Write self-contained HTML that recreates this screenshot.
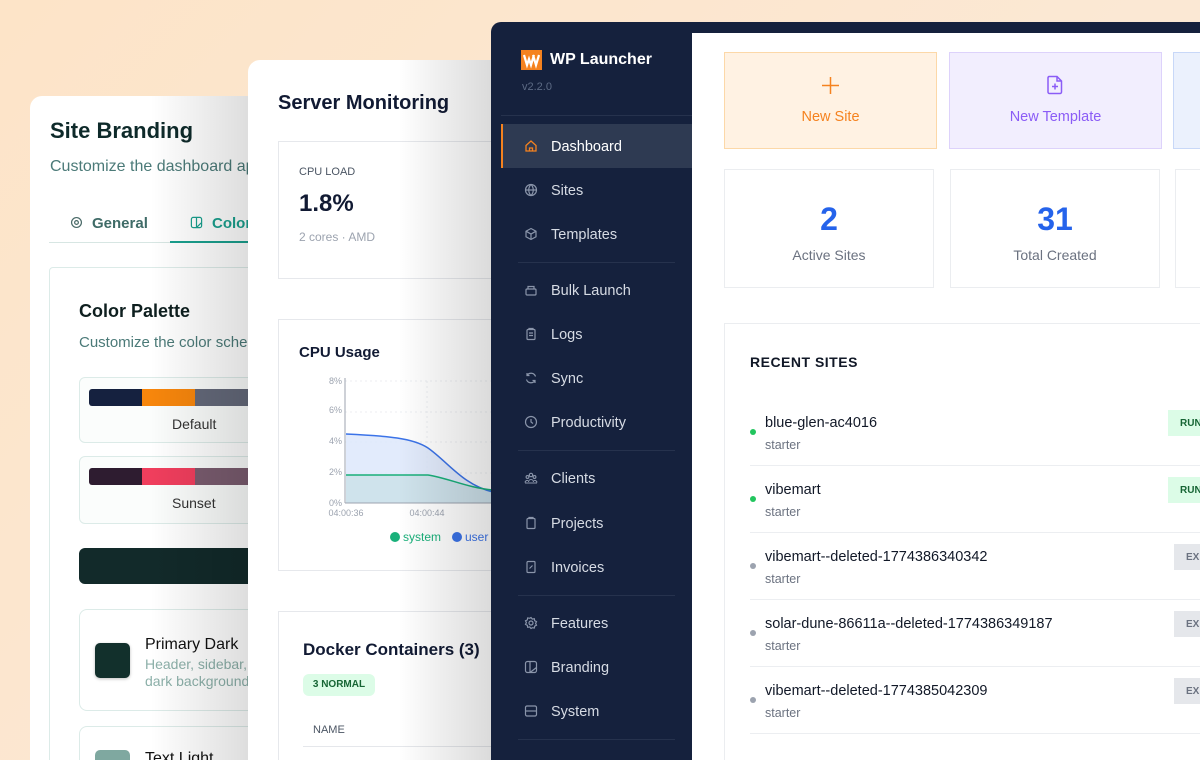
<!DOCTYPE html>
<html><head><meta charset="utf-8"><style>
*{box-sizing:border-box;margin:0;padding:0}
html{width:1200px;height:760px;overflow:hidden}
body{width:1200px;height:760px;overflow:hidden;position:relative;font-family:"Liberation Sans",sans-serif;background:linear-gradient(135deg,#fde4c8 0%,#fbe8d4 60%,#f9e9da 100%)}
.abs{position:absolute}
.card{position:absolute;background:#fff;border-radius:12px;overflow:hidden}
.shade{position:absolute;top:0;bottom:0;pointer-events:none}
.t{position:absolute;white-space:nowrap;margin-top:2px}
.nav{position:absolute;left:551px;color:#d6dbe4;font-size:14.5px;margin-top:2px}
.ico{position:absolute;left:524px;width:14px;height:14px}
.div{position:absolute;left:518px;width:157px;height:1px;background:#26324d}
</style></head><body>

<!-- Card 1: Site Branding -->
<div class="card" style="left:30px;top:96px;width:240px;height:700px">
  <div class="t" style="left:20px;top:20px;font-size:22px;font-weight:bold;color:#0e2a2a">Site Branding</div>
  <div class="t" style="left:20px;top:60px;font-size:16px;color:#4b7a78">Customize the dashboard appearance</div>
  <svg class="abs" style="left:40px;top:120px" width="13" height="13" viewBox="0 0 14 14" fill="none" stroke="#4a6a68" stroke-width="1.3"><circle cx="7" cy="7" r="2"/><circle cx="7" cy="7" r="5.3"/></svg>
  <div class="t" style="left:62px;top:117px;font-size:15px;font-weight:bold;color:#3f6b67">General</div>
  <svg class="abs" style="left:160px;top:120px" width="13" height="13" viewBox="0 0 14 14" fill="none" stroke="#1aa08e" stroke-width="1.3"><rect x="1.5" y="1.5" width="11" height="11" rx="2"/><path d="M7 1.5v11M7 12.5l5-5"/></svg>
  <div class="t" style="left:182px;top:117px;font-size:15px;font-weight:bold;color:#1aa08e">Colors</div>
  <div class="abs" style="left:19px;top:146px;width:230px;height:1px;background:#d7e6e3"></div>
  <div class="abs" style="left:140px;top:145px;width:100px;height:2px;background:#1aa08e"></div>
  <div class="abs" style="left:19px;top:171px;width:240px;height:560px;border:1px solid #dcebe8;border-radius:4px"></div>
  <div class="t" style="left:49px;top:203px;font-size:18px;font-weight:bold;color:#0e1f1f">Color Palette</div>
  <div class="t" style="left:49px;top:236px;font-size:15px;color:#4b7a78">Customize the color scheme</div>
  <div class="abs" style="left:49px;top:281px;width:200px;height:66px;border:1px solid #dcebe8;border-radius:6px;background:#fbfdfc"></div>
  <div class="abs" style="left:59px;top:293px;width:53px;height:17px;background:#15213f;border-radius:3px 0 0 3px"></div>
  <div class="abs" style="left:112px;top:293px;width:53px;height:17px;background:#f7860c"></div>
  <div class="abs" style="left:165px;top:293px;width:60px;height:17px;background:#64697a"></div>
  <div class="t" style="left:142px;top:318px;font-size:14px;color:#333">Default</div>
  <div class="abs" style="left:49px;top:360px;width:200px;height:68px;border:1px solid #dcebe8;border-radius:6px;background:#fbfdfc"></div>
  <div class="abs" style="left:59px;top:372px;width:53px;height:17px;background:#2e1c30;border-radius:3px 0 0 3px"></div>
  <div class="abs" style="left:112px;top:372px;width:53px;height:17px;background:#f03e5d"></div>
  <div class="abs" style="left:165px;top:372px;width:60px;height:17px;background:#7a5c6f"></div>
  <div class="t" style="left:142px;top:397px;font-size:14px;color:#333">Sunset</div>
  <div class="abs" style="left:49px;top:452px;width:200px;height:36px;background:#122a2a;border-radius:6px"></div>
  <div class="abs" style="left:49px;top:513px;width:200px;height:102px;border:1px solid #dcebe8;border-radius:8px"></div>
  <div class="abs" style="left:65px;top:547px;width:35px;height:35px;background:#12302c;border-radius:5px;box-shadow:0 1px 3px rgba(0,0,0,.25)"></div>
  <div class="t" style="left:115px;top:538px;font-size:16px;color:#111">Primary Dark</div>
  <div class="t" style="left:115px;top:558px;font-size:14px;color:#8cb0a9;line-height:17px">Header, sidebar,<br>dark background</div>
  <div class="abs" style="left:49px;top:630px;width:200px;height:100px;border:1px solid #dcebe8;border-radius:8px"></div>
  <div class="abs" style="left:65px;top:654px;width:35px;height:35px;background:#7fa8a0;border-radius:5px"></div>
  <div class="t" style="left:115px;top:652px;font-size:16px;color:#111">Text Light</div>
  <div class="shade" style="left:120px;width:120px;background:linear-gradient(90deg,rgba(0,0,0,0),rgba(0,0,0,.16))"></div>
</div>

<!-- Card 2: Server Monitoring -->
<div class="card" style="left:248px;top:60px;width:260px;height:740px">
  <div class="t" style="left:30px;top:30px;font-size:20px;font-weight:bold;color:#111a33">Server Monitoring</div>
  <div class="abs" style="left:30px;top:81px;width:240px;height:138px;border:1px solid #e6e8ec"></div>
  <div class="t" style="left:51px;top:104px;font-size:11px;color:#4b5563">CPU LOAD</div>
  <div class="t" style="left:51px;top:128px;font-size:24px;font-weight:bold;color:#111a33">1.8%</div>
  <div class="t" style="left:51px;top:168px;font-size:12px;color:#9ca3af">2 cores · AMD</div>
  <div class="abs" style="left:30px;top:259px;width:240px;height:252px;border:1px solid #e6e8ec"></div>
  <div class="t" style="left:51px;top:282px;font-size:15px;font-weight:bold;color:#111a33">CPU Usage</div>
  <svg class="abs" style="left:0;top:0" width="260" height="500">
    <g stroke="#eceef2" stroke-dasharray="2 3"><line x1="97" y1="321" x2="260" y2="321"/><line x1="97" y1="352" x2="260" y2="352"/><line x1="97" y1="382" x2="260" y2="382"/><line x1="97" y1="413" x2="260" y2="413"/><line x1="179" y1="321" x2="179" y2="443"/></g>
    <path d="M98 374 C140 376 165 378 180 388 C200 402 215 425 245 432 L245 443 L98 443Z" fill="#dbe6fb" opacity=".8"/>
    <path d="M98 415 L180 415 C200 418 220 428 245 430 L245 443 L98 443Z" fill="#cfe3ec"/>
    <path d="M98 374 C140 376 165 378 180 388 C200 402 215 425 245 432" fill="none" stroke="#3b73e8" stroke-width="1.5"/>
    <path d="M98 415 L180 415 C200 418 220 428 245 430" fill="none" stroke="#19b07a" stroke-width="1.5"/>
    <line x1="97" y1="318" x2="97" y2="443" stroke="#9ca3af"/><line x1="97" y1="443" x2="260" y2="443" stroke="#9ca3af"/>
    <g font-size="9" fill="#9ca3af" font-family="Liberation Sans" text-anchor="end"><text x="94" y="324">8%</text><text x="94" y="353">6%</text><text x="94" y="384">4%</text><text x="94" y="415">2%</text><text x="94" y="446">0%</text></g>
    <g font-size="9" fill="#9ca3af" font-family="Liberation Sans" text-anchor="middle"><text x="98" y="456">04:00:36</text><text x="179" y="456">04:00:44</text></g>
    <circle cx="147" cy="477" r="5" fill="#19b07a"/><text x="155" y="481" font-size="12" fill="#19b07a" font-family="Liberation Sans">system</text>
    <circle cx="209" cy="477" r="5" fill="#3b73e8"/><text x="217" y="481" font-size="12" fill="#3b73e8" font-family="Liberation Sans">user</text>
  </svg>
  <div class="abs" style="left:30px;top:551px;width:240px;height:200px;border:1px solid #e6e8ec"></div>
  <div class="t" style="left:55px;top:578px;font-size:17px;font-weight:bold;color:#111a33">Docker Containers (3)</div>
  <div class="abs" style="left:55px;top:614px;width:72px;height:22px;background:#dcfce7;border-radius:6px;font-size:10px;font-weight:bold;color:#166534;text-align:center;line-height:22px">3 NORMAL</div>
  <div class="t" style="left:65px;top:662px;font-size:11px;color:#4b5563">NAME</div>
  <div class="abs" style="left:55px;top:686px;width:200px;height:1px;background:#e5e7eb"></div>
  <div class="shade" style="left:150px;width:110px;background:linear-gradient(90deg,rgba(0,0,0,0),rgba(0,0,0,.17))"></div>
</div>

<!-- Card 3: App -->
<div class="abs" style="left:491px;top:22px;width:709px;height:738px;background:#15213d;border-radius:10px 0 0 0"></div>
<div class="abs" style="left:692px;top:33px;width:508px;height:727px;background:#fff"></div>

<!-- sidebar -->
<svg class="abs" style="left:521px;top:50px" width="21" height="20" viewBox="0 0 21 20"><rect width="21" height="20" fill="#f5821f"/><path d="M3 5l3 10 2-6 2 6 3-10M12 5l3 10 3-10" fill="none" stroke="#fff" stroke-width="2.2"/></svg>
<div class="t" style="left:550px;top:49px;font-size:16px;font-weight:bold;color:#fff">WP Launcher</div>
<div class="t" style="left:522px;top:79px;font-size:11px;color:#5d6b85">v2.2.0</div>
<div class="abs" style="left:501px;top:115px;width:191px;height:1px;background:#26324d"></div>
<div class="abs" style="left:501px;top:124px;width:191px;height:44px;background:#2e3a52;border-left:2px solid #f5821f"></div>
<svg class="ico" style="top:139px" viewBox="0 0 14 14" fill="none" stroke="#f5821f" stroke-width="1.3"><path d="M2 6.5L7 2l5 4.5V12H2z M5.5 12V9h3v3"/></svg>
<div class="nav" style="top:137px;color:#fff">Dashboard</div>
<svg class="ico" style="top:183px" viewBox="0 0 14 14" fill="none" stroke="#8a95aa" stroke-width="1.2"><circle cx="7" cy="7" r="5.5"/><path d="M1.5 7h11M7 1.5c-3 3-3 8 0 11c3-3 3-8 0-11"/></svg>
<div class="nav" style="top:181px">Sites</div>
<svg class="ico" style="top:227px" viewBox="0 0 14 14" fill="none" stroke="#8a95aa" stroke-width="1.2"><path d="M7 1.5l5 2.7v5.6L7 12.5 2 9.8V4.2zM2 4.2L7 7l5-2.8M7 7v5.5"/></svg>
<div class="nav" style="top:225px">Templates</div>
<div class="div" style="top:262px"></div>
<svg class="ico" style="top:283px" viewBox="0 0 14 14" fill="none" stroke="#8a95aa" stroke-width="1.2"><rect x="2" y="6" width="10" height="6" rx="1"/><path d="M4 6V3.5h6V6"/></svg>
<div class="nav" style="top:281px">Bulk Launch</div>
<svg class="ico" style="top:327px" viewBox="0 0 14 14" fill="none" stroke="#8a95aa" stroke-width="1.2"><rect x="3" y="2.5" width="8" height="10" rx="1"/><path d="M5 2.5V1.5h4v1M5 6h4M5 8.5h4"/></svg>
<div class="nav" style="top:325px">Logs</div>
<svg class="ico" style="top:371px" viewBox="0 0 14 14" fill="none" stroke="#8a95aa" stroke-width="1.2"><path d="M11.5 5.5A4.7 4.7 0 0 0 3 4.5M2.5 8.5A4.7 4.7 0 0 0 11 9.5M3 2v2.5h2.5M11 12V9.5H8.5"/></svg>
<div class="nav" style="top:369px">Sync</div>
<svg class="ico" style="top:415px" viewBox="0 0 14 14" fill="none" stroke="#8a95aa" stroke-width="1.2"><circle cx="7" cy="7" r="5.5"/><path d="M7 4v3l2 1.5"/></svg>
<div class="nav" style="top:413px">Productivity</div>
<div class="div" style="top:450px"></div>
<svg class="ico" style="top:471px" viewBox="0 0 14 14" fill="none" stroke="#8a95aa" stroke-width="1.1"><circle cx="7" cy="4" r="1.7"/><circle cx="3.5" cy="6" r="1.4"/><circle cx="10.5" cy="6" r="1.4"/><path d="M4.5 11a2.5 2.5 0 0 1 5 0M1 11.5a2.3 2.3 0 0 1 3-2M13 11.5a2.3 2.3 0 0 0-3-2M1 12h12"/></svg>
<div class="nav" style="top:469px">Clients</div>
<svg class="ico" style="top:516px" viewBox="0 0 14 14" fill="none" stroke="#8a95aa" stroke-width="1.2"><rect x="3" y="2.5" width="8" height="10" rx="1"/><path d="M5 2.5V1.5h4v1"/></svg>
<div class="nav" style="top:514px">Projects</div>
<svg class="ico" style="top:560px" viewBox="0 0 14 14" fill="none" stroke="#8a95aa" stroke-width="1.2"><rect x="3" y="1.5" width="8" height="11" rx="1"/><path d="M5.5 8.5l3-3M5.5 5.5h.1M8.5 8.5h.1"/></svg>
<div class="nav" style="top:558px">Invoices</div>
<div class="div" style="top:595px"></div>
<svg class="ico" style="top:616px" viewBox="0 0 14 14" fill="none" stroke="#8a95aa" stroke-width="1.2"><circle cx="7" cy="7" r="2"/><path d="M7 1.5l1.3 1.6 2-.4.4 2 1.8.9-.9 1.8.9 1.8-1.8.9-.4 2-2-.4L7 12.5l-1.3-1.6-2 .4-.4-2-1.8-.9.9-1.8-.9-1.8 1.8-.9.4-2 2 .4z"/></svg>
<div class="nav" style="top:614px">Features</div>
<svg class="ico" style="top:660px" viewBox="0 0 14 14" fill="none" stroke="#8a95aa" stroke-width="1.2"><rect x="1.5" y="1.5" width="11" height="11" rx="2"/><path d="M6 1.5v11M6 12.5l6.5-5"/></svg>
<div class="nav" style="top:658px">Branding</div>
<svg class="ico" style="top:704px" viewBox="0 0 14 14" fill="none" stroke="#8a95aa" stroke-width="1.2"><rect x="1.5" y="2" width="11" height="10" rx="1.5"/><path d="M1.5 7h11"/></svg>
<div class="nav" style="top:702px">System</div>
<div class="div" style="top:739px"></div>

<!-- main -->
<div class="abs" style="left:724px;top:52px;width:213px;height:97px;background:#fff2e3;border:1px solid #fcd8a8"></div>
<svg class="abs" style="left:821px;top:76px" width="19" height="19" viewBox="0 0 19 19" stroke="#f5821f" stroke-width="1.5"><path d="M9.5 1v17M1 9.5h17"/></svg>
<div class="t" style="left:724px;width:213px;text-align:center;top:107px;font-size:14.5px;color:#f5821f">New Site</div>
<div class="abs" style="left:949px;top:52px;width:213px;height:97px;background:#f2eefe;border:1px solid #ddd2fb"></div>
<svg class="abs" style="left:1047px;top:75px" width="16" height="20" viewBox="0 0 16 20" fill="none" stroke="#8b5cf6" stroke-width="1.5"><path d="M2 1.5h8l4.5 4.5v11a1.5 1.5 0 0 1-1.5 1.5H2.5A1.5 1.5 0 0 1 1 17V3a1.5 1.5 0 0 1 1-1.5zM10 1.5V6h4.5M8 8.5v6M5 11.5h6"/></svg>
<div class="t" style="left:949px;width:213px;text-align:center;top:107px;font-size:14.5px;color:#8b5cf6">New Template</div>
<div class="abs" style="left:1173px;top:52px;width:60px;height:97px;background:#ebf1fd;border:1px solid #c8d8f8"></div>

<div class="abs" style="left:724px;top:169px;width:210px;height:119px;border:1px solid #ebedf0"></div>
<div class="t" style="left:724px;width:210px;text-align:center;top:199px;font-size:32px;font-weight:bold;color:#2563eb">2</div>
<div class="t" style="left:724px;width:210px;text-align:center;top:245px;font-size:14px;color:#6b7280">Active Sites</div>
<div class="abs" style="left:950px;top:169px;width:210px;height:119px;border:1px solid #ebedf0"></div>
<div class="t" style="left:950px;width:210px;text-align:center;top:199px;font-size:32px;font-weight:bold;color:#2563eb">31</div>
<div class="t" style="left:950px;width:210px;text-align:center;top:245px;font-size:14px;color:#6b7280">Total Created</div>
<div class="abs" style="left:1175px;top:169px;width:60px;height:119px;border:1px solid #ebedf0"></div>

<div class="abs" style="left:724px;top:323px;width:520px;height:460px;border:1px solid #ebedf0"></div>
<div class="t" style="left:750px;top:352px;font-size:14px;font-weight:bold;color:#111827;letter-spacing:.5px">RECENT SITES</div>

<div class="abs" style="left:750px;top:429px;width:6px;height:6px;border-radius:50%;background:#22c55e"></div>
<div class="t" style="left:765px;top:413px;font-size:14.5px;color:#111827">blue-glen-ac4016</div>
<div class="t" style="left:765px;top:436px;font-size:12.5px;color:#6b7280">starter</div>
<div class="abs" style="left:1168px;top:410px;width:40px;height:26px;background:#dcfce7;color:#166534;font-size:10px;font-weight:bold;padding:8px 0 0 12px">RUN</div>
<div class="abs" style="left:750px;top:465px;width:460px;height:1px;background:#eceef1"></div>

<div class="abs" style="left:750px;top:496px;width:6px;height:6px;border-radius:50%;background:#22c55e"></div>
<div class="t" style="left:765px;top:480px;font-size:14.5px;color:#111827">vibemart</div>
<div class="t" style="left:765px;top:503px;font-size:12.5px;color:#6b7280">starter</div>
<div class="abs" style="left:1168px;top:477px;width:40px;height:26px;background:#dcfce7;color:#166534;font-size:10px;font-weight:bold;padding:8px 0 0 12px">RUN</div>
<div class="abs" style="left:750px;top:532px;width:460px;height:1px;background:#eceef1"></div>

<div class="abs" style="left:750px;top:563px;width:6px;height:6px;border-radius:50%;background:#9ca3af"></div>
<div class="t" style="left:765px;top:547px;font-size:14.5px;color:#111827">vibemart--deleted-1774386340342</div>
<div class="t" style="left:765px;top:570px;font-size:12.5px;color:#6b7280">starter</div>
<div class="abs" style="left:1174px;top:544px;width:40px;height:26px;background:#e5e7eb;color:#6b7280;font-size:10px;font-weight:bold;padding:8px 0 0 12px">EX</div>
<div class="abs" style="left:750px;top:599px;width:460px;height:1px;background:#eceef1"></div>

<div class="abs" style="left:750px;top:630px;width:6px;height:6px;border-radius:50%;background:#9ca3af"></div>
<div class="t" style="left:765px;top:614px;font-size:14.5px;color:#111827">solar-dune-86611a--deleted-1774386349187</div>
<div class="t" style="left:765px;top:637px;font-size:12.5px;color:#6b7280">starter</div>
<div class="abs" style="left:1174px;top:611px;width:40px;height:26px;background:#e5e7eb;color:#6b7280;font-size:10px;font-weight:bold;padding:8px 0 0 12px">EX</div>
<div class="abs" style="left:750px;top:666px;width:460px;height:1px;background:#eceef1"></div>

<div class="abs" style="left:750px;top:697px;width:6px;height:6px;border-radius:50%;background:#9ca3af"></div>
<div class="t" style="left:765px;top:681px;font-size:14.5px;color:#111827">vibemart--deleted-1774385042309</div>
<div class="t" style="left:765px;top:704px;font-size:12.5px;color:#6b7280">starter</div>
<div class="abs" style="left:1174px;top:678px;width:40px;height:26px;background:#e5e7eb;color:#6b7280;font-size:10px;font-weight:bold;padding:8px 0 0 12px">EX</div>
<div class="abs" style="left:750px;top:733px;width:460px;height:1px;background:#eceef1"></div>

</body></html>
